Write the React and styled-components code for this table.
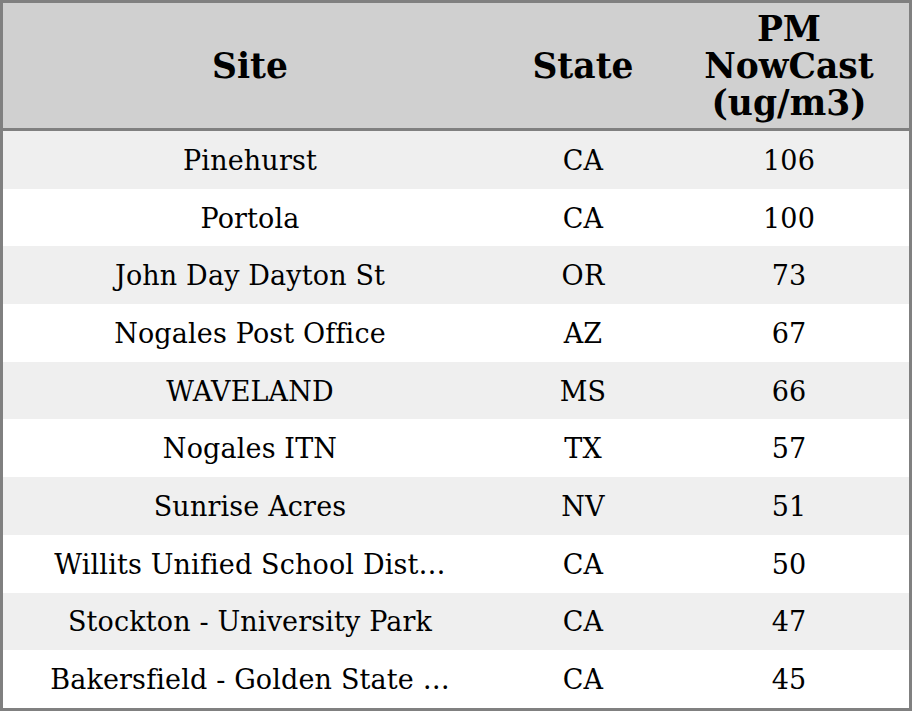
import React from "react"
import styled, { createGlobalStyle } from "styled-components"

const GlobalStyle = createGlobalStyle`
  html, body {
    margin: 0;
    padding: 0;
    background: #ffffff;
  }
`

const Frame = styled.div`
  width: 912px;
  height: 711px;
  box-sizing: border-box;
  border: 3px solid #808080;
  overflow: hidden;
`

const Table = styled.table`
  width: 906px;
  border-collapse: separate;
  border-spacing: 0;
  font-family: "DejaVu Serif", serif;
  color: #000000;
  table-layout: fixed;
`

const HeadCell = styled.th`
  background: #d0d0d0;
  font-size: 34.5px;
  font-weight: bold;
  line-height: 37px;
  height: 124px;
  padding: 1px 0 0;
  text-align: center;
  vertical-align: middle;
  border-bottom: 3px solid #808080;
`

const Row = styled.tr`
  background: ${props => (props.$odd ? "#efefef" : "#ffffff")};
  height: 57.7px;
`

const Cell = styled.td`
  font-size: 27px;
  letter-spacing: 0.15px;
  text-align: center;
  vertical-align: middle;
  padding: 1px 0 0;
  white-space: nowrap;
  overflow: hidden;
`

const rows = [
  ["Pinehurst", "CA", 106],
  ["Portola", "CA", 100],
  ["John Day Dayton St", "OR", 73],
  ["Nogales Post Office", "AZ", 67],
  ["WAVELAND", "MS", 66],
  ["Nogales ITN", "TX", 57],
  ["Sunrise Acres", "NV", 51],
  ["Willits Unified School Dist…", "CA", 50],
  ["Stockton - University Park", "CA", 47],
  ["Bakersfield - Golden State …", "CA", 45],
]

const App = () => {
  return (
    <>
      <GlobalStyle />
      <Frame>
        <Table>
          <colgroup>
            <col style={{ width: 494 }} />
            <col style={{ width: 172 }} />
            <col style={{ width: 240 }} />
          </colgroup>
          <thead>
            <tr>
              <HeadCell>Site</HeadCell>
              <HeadCell>State</HeadCell>
              <HeadCell>
                PM
                <br />
                NowCast
                <br />
                (ug/m3)
              </HeadCell>
            </tr>
          </thead>
          <tbody>
            {rows.map(([site, state, value], i) => (
              <Row key={site} $odd={i % 2 === 0}>
                <Cell>{site}</Cell>
                <Cell>{state}</Cell>
                <Cell>{value}</Cell>
              </Row>
            ))}
          </tbody>
        </Table>
      </Frame>
    </>
  )
}

export default App
